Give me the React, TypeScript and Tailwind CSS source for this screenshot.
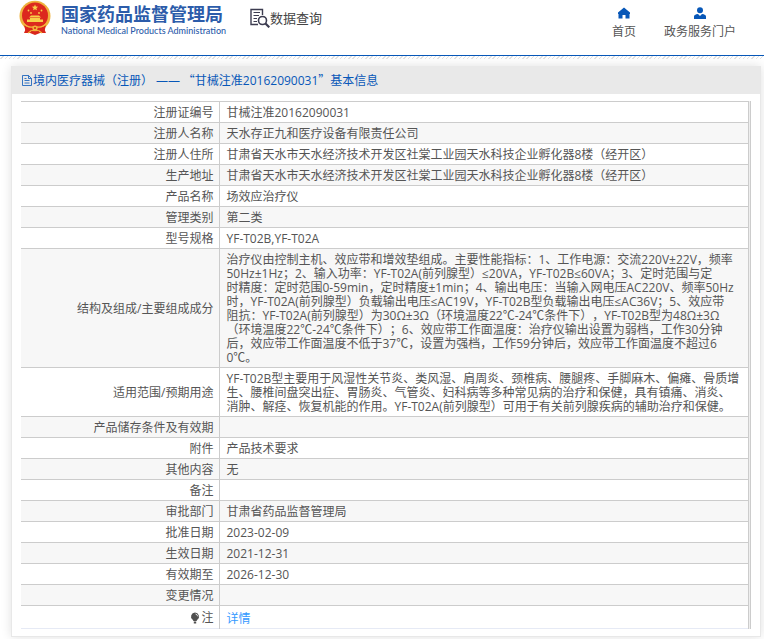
import type { ReactNode } from 'react';

type Row = {
  label: ReactNode;
  value?: ReactNode;
};

const STRUCTURE = `治疗仪由控制主机、效应带和增效垫组成。主要性能指标：1、工作电源：交流220V±22V，频率
50Hz±1Hz；2、输入功率：YF-T02A(前列腺型）≤20VA，YF-T02B≤60VA；3、定时范围与定
时精度：定时范围0-59min，定时精度±1min；4、输出电压：当输入网电压AC220V、频率50Hz
时，YF-T02A(前列腺型）负载输出电压≤AC19V，YF-T02B型负载输出电压≤AC36V；5、效应带
阻抗：YF-T02A(前列腺型）为30Ω±3Ω（环境温度22℃-24℃条件下），YF-T02B型为48Ω±3Ω
（环境温度22℃-24℃条件下）；6、效应带工作面温度：治疗仪输出设置为弱档，工作30分钟
后，效应带工作面温度不低于37℃，设置为强档，工作59分钟后，效应带工作面温度不超过6
0℃。`;

const USAGE = `YF-T02B型主要用于风湿性关节炎、类风湿、肩周炎、颈椎病、腰腿疼、手脚麻木、偏瘫、骨质增
生、腰椎间盘突出症、胃肠炎、气管炎、妇科病等多种常见病的治疗和保健，具有镇痛、消炎、
消肿、解痉、恢复机能的作用。YF-T02A(前列腺型）可用于有关前列腺疾病的辅助治疗和保健。`;

const ROWS: Row[] = [
  { label: '注册证编号', value: '甘械注准20162090031' },
  { label: '注册人名称', value: '天水存正九和医疗设备有限责任公司' },
  { label: '注册人住所', value: '甘肃省天水市天水经济技术开发区社棠工业园天水科技企业孵化器8楼（经开区）' },
  { label: '生产地址', value: '甘肃省天水市天水经济技术开发区社棠工业园天水科技企业孵化器8楼（经开区）' },
  { label: '产品名称', value: '场效应治疗仪' },
  { label: '管理类别', value: '第二类' },
  { label: '型号规格', value: 'YF-T02B,YF-T02A' },
  { label: '结构及组成/主要组成成分', value: STRUCTURE },
  { label: '适用范围/预期用途', value: USAGE },
  { label: '产品储存条件及有效期' },
  { label: '附件', value: '产品技术要求' },
  { label: '其他内容', value: '无' },
  { label: '备注' },
  { label: '审批部门', value: '甘肃省药品监督管理局' },
  { label: '批准日期', value: '2023-02-09' },
  { label: '生效日期', value: '2021-12-31' },
  { label: '有效期至', value: '2026-12-30' },
  { label: '变更情况' },
];

function Emblem() {
  return (
    <svg viewBox="0 0 32 36" className="h-9 w-8 shrink-0" aria-hidden="true">
      <path d="M8 26 L24 26 L27 33 L21 33 L16 35 L11 33 L5 33 Z" fill="#d9261c" />
      <ellipse cx="16" cy="16" rx="15.500" ry="15.200" fill="#efb13c" />
      <ellipse cx="16" cy="15.500" rx="13" ry="13" fill="#dc281e" />
      <path d="M16 4.500 l.9 2 2.200 .2 -1.700 1.500 .5 2.100 -1.900 -1.100 -1.900 1.100 .5 -2.100 -1.700 -1.500 2.200 -.2z" fill="#f8cf4a" />
      <g fill="#f8cf4a">
        <circle cx="9.500" cy="10.500" r=".9" />
        <circle cx="12" cy="13" r=".9" />
        <circle cx="20" cy="13" r=".9" />
        <circle cx="22.500" cy="10.500" r=".9" />
        <path d="M12 15.500 L20 15.500 L22 17.500 H10 Z" />
        <path d="M11 18 H21 V19.500 H24 V22 H8 V19.500 H11 Z" />
      </g>
      <path d="M5 25 Q10 29 16 27 Q22 29 27 25 L25 33 L20 30 H12 L7 33 Z" fill="#d9261c" />
      <path d="M4 23 Q9 28 14 27 M28 23 Q23 28 18 27 M12 31 L9 33 M20 31 L23 33" fill="none" stroke="#f3b63a" strokeWidth="1.300" />
      <circle cx="16" cy="28" r="2.600" fill="#f3b63a" />
      <circle cx="16" cy="28" r="1.100" fill="#d9261c" />
    </svg>
  );
}

function SearchDocIcon() {
  return (
    <svg viewBox="0 0 20 20" className="h-5 w-5 shrink-0" fill="none" stroke="#3c3c50" aria-hidden="true">
      <path d="M8 16.500 H1 V1.500 H12.500 V7" strokeWidth="1.400" />
      <path d="M3.500 4.500 H10 M3.500 7.500 H9 M3.500 10.500 H7 M3.500 13.500 H7" strokeWidth="1.200" />
      <circle cx="12.500" cy="12.500" r="4" strokeWidth="1.600" />
      <path d="M15.500 15.500 L19.300 19.300" strokeWidth="2.200" />
    </svg>
  );
}

function HomeIcon() {
  return (
    <svg viewBox="0 0 12 12" className="h-3 w-3" fill="#0757b8" aria-hidden="true">
      <path d="M6 .5 L12 5.500 V7 H11.500 V11.500 H7.500 V8 H4.500 V11.500 H.5 V7 H0 V5.500 Z" />
    </svg>
  );
}

function UserIcon() {
  return (
    <svg viewBox="0 0 12 12" className="h-3 w-3" fill="#0757b8" aria-hidden="true">
      <circle cx="6" cy="3.200" r="3" />
      <path d="M0 12 V9.500 Q0 7.500 4 7 L6 9 L8 7 Q12 7.500 12 9.500 V12 Z" />
    </svg>
  );
}

function FileIcon() {
  return (
    <svg viewBox="0 0 12 12" className="h-3 w-3 shrink-0" fill="none" stroke="#0757b8" aria-hidden="true">
      <path d="M1.500 1.500 H7.500 L10.500 4.500 V11.500 H1.500 Z M7.500 1.500 V4.500 H10.500 M3.500 4.500 H5.500 M3.500 6.500 H8.500 M3.500 9 H8.500" strokeWidth=".8" />
    </svg>
  );
}

function BulbIcon() {
  return (
    <svg viewBox="0 0 10 12" className="h-3 w-[10px]" fill="#505050" aria-hidden="true">
      <path d="M5 .5 A4 4 0 0 1 7.500 7.600 L6.500 9 H3.500 L2.500 7.600 A4 4 0 0 1 5 .5 Z" />
      <path d="M3.800 9.500 H6.200 V11.500 H3.800 Z" />
      <path d="M5.500 2 Q7.500 2.300 7.600 4.300" stroke="#fff" strokeWidth=".8" fill="none" />
    </svg>
  );
}

export default function App() {
  return (
    <div className="bg-white font-['Open_Sans','Noto_Sans_CJK_SC',sans-serif] text-xs text-[#555] [text-spacing-trim:space-all]">
      <header className="flex h-14 items-start justify-between border-b border-[#0757b8] pr-7 pl-[19px]">
        <div className="flex items-start">
          <Emblem />
          <div className="ml-[10px] pt-1 text-[#2c5caa]">
            <h1 className="text-[18px] leading-5 font-bold whitespace-nowrap">国家药品监督管理局</h1>
            <p className="pt-px font-['Lato',sans-serif] text-[9px] leading-3 font-medium whitespace-nowrap">
              National Medical Products Administration
            </p>
          </div>
          <div className="ml-6 flex items-center pt-2 text-[13px] leading-5 text-[#444]">
            <SearchDocIcon />
            <span className="whitespace-nowrap">数据查询</span>
          </div>
        </div>
        <nav className="flex gap-7 pt-[7px] leading-4">
          <a href="#home" className="flex flex-col items-center gap-[5px]">
            <HomeIcon />
            首页
          </a>
          <a href="#portal" className="flex flex-col items-center gap-[5px]">
            <UserIcon />
            政务服务门户
          </a>
        </nav>
      </header>
      <div className="h-[3px] bg-[repeating-linear-gradient(135deg,#fff_0px,#fff_2px,#e2e2e2_2px,#e2e2e2_3px)]" />

      <main className="pt-[7px] pr-[3px] pb-[2px] pl-[11px]">
        <section className="border border-t-0 border-[#e8e8e8] pb-[7px] shadow-[0_0_10px_rgba(0,0,0,0.12)]">
          <h2 className="flex h-7 items-center bg-[#e9e9e9] pl-[9px] text-[#0757b8]">
            <FileIcon />
            <span>
              境内医疗器械（注册） ——
              <span className="font-['Noto_Sans_CJK_SC',sans-serif]"> “</span>
              甘械注准20162090031
              <span className="font-['Noto_Sans_CJK_SC',sans-serif]">”</span>
              基本信息
            </span>
          </h2>
          <div className="mt-[7px] mr-[9px] ml-[9px] border-r border-[#ccc] bg-[#eee] pr-px">
            <table className="w-full table-fixed border-collapse bg-white leading-[14px]">
              <colgroup>
                <col className="w-[198px]" />
                <col />
              </colgroup>
              <tbody>
                {ROWS.map((row, i) => (
                  <tr key={i} className="border-y border-[#ccc] even:bg-[#f7f7f7]">
                    <th scope="row" className="border-r border-[#ccc] pt-1 pr-[5px] pb-[2px] text-right font-normal">
                      {row.label}
                    </th>
                    <td className="h-[21px] border-r border-[#ccc] pt-1 pr-0 pb-[2px] pl-[7px] break-all whitespace-pre-line">
                      {row.value}
                    </td>
                  </tr>
                ))}
                <tr className="border-b border-[#e6eaf5]">
                  <th scope="row" className="border-r border-[#ccc] pt-[2px] pr-[5px] font-normal">
                    <div className="flex items-center justify-end gap-px">
                      <BulbIcon />注
                    </div>
                  </th>
                  <td className="h-[23px] border-r border-[#ccc] pt-[6px] pb-[2px] pl-[7px]">
                    <a href="#detail" className="text-[#3399ff]">详情</a>
                  </td>
                </tr>
              </tbody>
            </table>
          </div>
        </section>
      </main>
    </div>
  );
}
